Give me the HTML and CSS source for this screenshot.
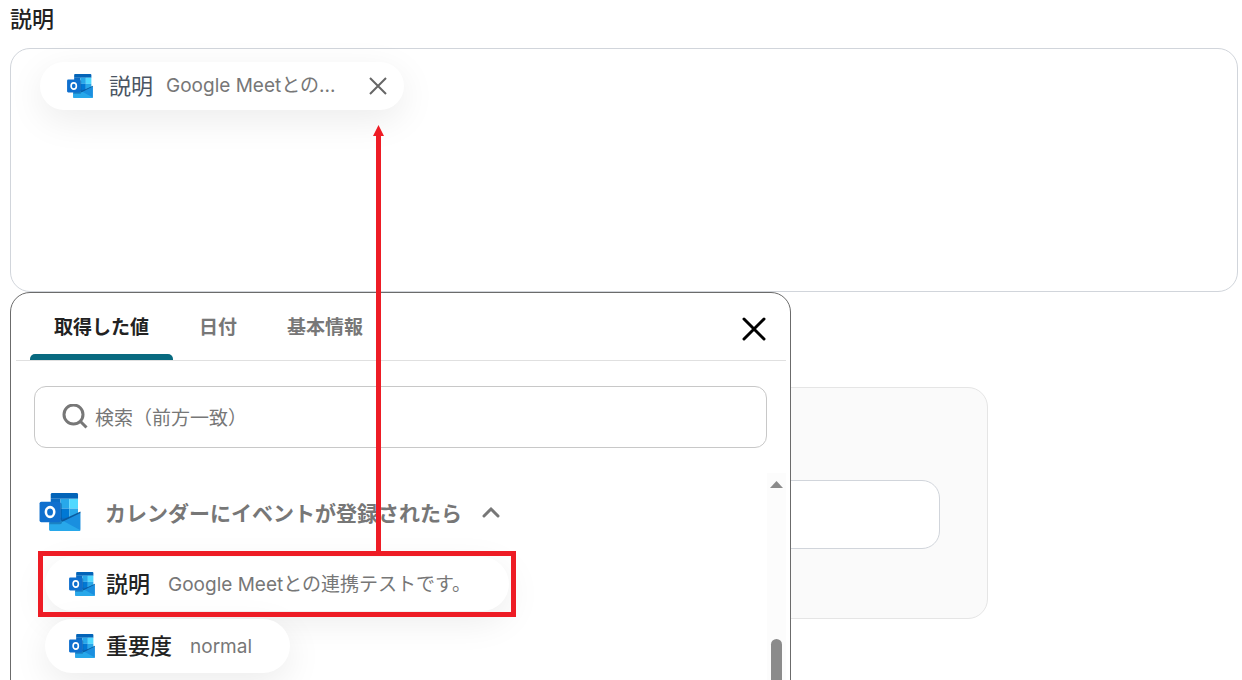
FILE: index.html
```html
<!DOCTYPE html>
<html lang="ja">
<head>
  <meta charset="UTF-8" />
  <meta name="viewport" content="width=device-width, initial-scale=1.0" />
  <title>説明</title>
  <link rel="stylesheet" href="styles.css">
</head>
<body>
  <svg class="defs" aria-hidden="true">
    <symbol id="outlook" viewBox="0 0 42 39">
      <path d="M13 0h25a1.500 1.500 0 0 1 1.500 1.500V6H11.500V1.500A1.500 1.500 0 0 1 13 0z" fill="#0364b8" />
      <path d="M11.500 6h10v10h-10z" fill="#0a6cc4" />
      <path d="M21.500 6h9v10h-9z" fill="#28a8ea" />
      <path d="M30.500 6h9v10h-9z" fill="#50d9ff" />
      <path d="M11.500 16h10v14h-10z" fill="#0364b8" />
      <path d="M21.500 16h9v12h-9z" fill="#0078d4" />
      <path d="M30.500 16h9v9h-9z" fill="#28a8ea" />
      <path d="M21.500 25.500h18V30h-18z" fill="#0a6cc4" />
      <path d="M42 20v17.500a1.500 1.500 0 0 1-1.500 1.500h-29A1.500 1.500 0 0 1 10 37.500V31l13-2z" fill="#1a8fdf" />
      <path d="M10 27h11l21 11.200c-.3.500-.8.800-1.500.8h-29A1.500 1.500 0 0 1 10 37.500z" fill="#28a8ea" />
      <path d="M22 28.300L42 19v1.500L23.500 29.500z" fill="#0a5a9e" />
      <path d="M11 10h10a2 2 0 0 1 2 2v18a2 2 0 0 1-2 2H10V10z" fill="#07498a" opacity=".4" />
      <rect x="0" y="9" width="21.500" height="21" rx="1.800" fill="#0f6fce" />
      <ellipse cx="10.800" cy="19.500" rx="4.300" ry="5" fill="none" stroke="#fff" stroke-width="2.600" />
    </symbol>
  </svg>

  <main class="page">
    <h1 class="label" id="desc-label">説明</h1>
    <div class="field">
      <div class="editor" role="group" aria-labelledby="desc-label">
        <div class="chip chip-selected">
          <svg class="chip-icon"><use href="#outlook" /></svg>
          <span class="chip-name">説明</span>
          <span class="chip-value">Google Meetとの...</span>
          <button class="chip-remove" type="button" aria-label="削除">
            <svg width="18" height="18" viewBox="0 0 18 18"><path d="M1 1l16 16M17 1L1 17" /></svg>
          </button>
        </div>
      </div>

      <section class="picker">
        <header class="picker-head">
          <div class="tabs" role="tablist">
            <button class="tab active" type="button" role="tab" aria-selected="true">取得した値</button>
            <button class="tab" type="button" role="tab" aria-selected="false">日付</button>
            <button class="tab" type="button" role="tab" aria-selected="false">基本情報</button>
          </div>
          <button class="picker-close" type="button" aria-label="閉じる">
            <svg width="24" height="24" viewBox="0 0 24 24"><path d="M2 2l20 20M22 2L2 22" /></svg>
          </button>
        </header>

        <label class="search">
          <svg width="26" height="26" viewBox="0 0 26 26"><circle cx="11.500" cy="10.500" r="9.500" /><path d="M18.500 17.500l6 6" /></svg>
          <input type="text" placeholder="検索（前方一致）" aria-label="検索" />
        </label>

        <div class="results">
          <div class="results-main">
            <button class="group" type="button" aria-expanded="true">
              <svg class="group-icon"><use href="#outlook" /></svg>
              <span>カレンダーにイベントが登録されたら</span>
              <svg class="chevron" width="18" height="12" viewBox="0 0 18 12"><path d="M2 10l7-7 7 7" /></svg>
            </button>
            <div class="options">
              <div class="option-row">
                <button class="chip option" type="button">
                  <svg class="chip-icon"><use href="#outlook" /></svg>
                  <span class="chip-name">説明</span>
                  <span class="chip-value">Google Meetとの連携テストです。</span>
                </button>
                <div class="marker">
                  <svg class="marker-arrow" width="11" height="426" viewBox="0 0 11 426"><path d="M5.500 0L11 11H8v415H3V11H0z" /></svg>
                </div>
              </div>
              <div class="option-row">
                <button class="chip option" type="button">
                  <svg class="chip-icon"><use href="#outlook" /></svg>
                  <span class="chip-name">重要度</span>
                  <span class="chip-value">normal</span>
                </button>
              </div>
            </div>
          </div>
          <div class="scrollbar">
            <svg width="13" height="7" viewBox="0 0 13 7"><path d="M6.500 0L13 7H0z" /></svg>
            <div class="thumb"></div>
          </div>
        </div>
      </section>
    </div>

    <div class="panel">
      <input class="panel-input" type="text" aria-label="値" />
    </div>
  </main>
</body>
</html>
```
FILE: styles.css
```css
* {
  box-sizing: border-box;
}
body {
  margin: 0;
  background: #fff;
  color: #222;
  font-family: Inter, "Noto Sans CJK JP", sans-serif;
}
button,
input {
  font: inherit;
  color: inherit;
  border: none;
  background: none;
  padding: 0;
}
button {
  cursor: pointer;
}
svg {
  display: block;
  flex: none;
}
.defs {
  position: absolute;
  width: 0;
  height: 0;
}
.page {
  height: 100vh;
  padding: 4px 4px 0 10px;
  overflow: hidden;
}
.label {
  margin: 0 0 14px;
  font-size: 22px;
  line-height: 30px;
  font-weight: 500;
}

/* editor */
.field {
  position: relative;
}
.editor {
  min-height: 244px;
  padding: 13px 29px;
  border: 1px solid #d1d5db;
  border-radius: 20px;
}
.chip {
  display: flex;
  align-items: center;
  width: fit-content;
  border-radius: 27px;
  background: #fff;
  box-shadow: 0 10px 36px rgba(0, 0, 0, 0.08);
  white-space: nowrap;
}
.chip-icon {
  width: 26px;
  height: 24px;
}
.chip-name {
  font-size: 22px;
  line-height: 30px;
}
.chip-value {
  font-size: 19px;
  line-height: 30px;
  color: #777;
}
.chip-selected {
  height: 48px;
  padding: 0 17px 0 27px;
}
.chip-selected .chip-name {
  margin: 0 13px 0 16px;
  color: #4b5563;
}
.chip-remove {
  margin-left: 34px;
}
.chip-remove path {
  fill: none;
  stroke: #666;
  stroke-width: 2;
}

/* value picker */
.picker {
  position: absolute;
  top: 100%;
  left: 0;
  width: 781px;
  max-width: 100%;
  height: 480px;
  display: flex;
  flex-direction: column;
  border: 1px solid #6b6b6b;
  border-radius: 20px;
  background: #fff;
}
.picker-head {
  display: flex;
  justify-content: space-between;
  align-items: center;
  height: 68px;
  margin: 0 4px 0 5px;
  padding: 4px 20px 0 14px;
  border-bottom: 1px solid #e0e0e0;
}
.tabs {
  display: flex;
  align-self: stretch;
  gap: 2px;
}
.tab {
  padding: 0 24px;
  border-bottom: 6px solid transparent;
  font-size: 19px;
  font-weight: 700;
  color: #777;
}
.tab.active {
  position: relative;
  color: #222;
}
.tab.active::after {
  content: "";
  position: absolute;
  left: 0;
  right: 0;
  bottom: -6px;
  height: 6px;
  border-radius: 5px 5px 0 0;
  background: #086a80;
}
.picker-close path {
  fill: none;
  stroke: #000;
  stroke-width: 3;
  stroke-linecap: round;
}
.search {
  display: flex;
  align-items: center;
  gap: 7px;
  height: 62px;
  margin: 25px 23px;
  padding: 0 27px;
  border: 1px solid #c8c8c8;
  border-radius: 12px;
}
.search svg {
  fill: none;
  stroke: #777;
  stroke-width: 3;
}
.search input {
  flex: 1;
  padding-top: 2px;
  font-size: 19px;
  outline: none;
}
.search input::placeholder {
  color: #777;
  opacity: 1;
}
.results {
  display: flex;
  flex: 1;
  padding: 0 4px 0 28px;
}
.results-main {
  flex: 1;
}
.group {
  display: flex;
  align-items: center;
  height: 78px;
  font-size: 21px;
  font-weight: 700;
  color: #777;
}
.group-icon {
  width: 42px;
  height: 38px;
  margin-right: 24px;
}
.chevron {
  margin-left: 20px;
  fill: none;
  stroke: #777;
  stroke-width: 3;
  stroke-linecap: round;
}
.options {
  display: flex;
  flex-direction: column;
  align-items: flex-start;
  gap: 8px;
  margin: 6px 0 0 6px;
}
.option-row {
  position: relative;
}
.option {
  height: 54px;
  padding: 0 38px 0 24px;
}
.option .chip-name {
  margin: 0 18px 0 11px;
  font-weight: 500;
}
.option .chip-value {
  padding-top: 2px;
}
.marker {
  position: absolute;
  z-index: 1;
  inset: -6px -7px;
  border: 5px solid #ee1c25;
  pointer-events: none;
}
.marker-arrow {
  position: absolute;
  left: 330px;
  bottom: calc(100% + 5px);
  fill: #ee1c25;
}
.scrollbar {
  display: flex;
  flex-direction: column;
  align-items: center;
  gap: 151px;
  width: 19px;
  padding-top: 8px;
  background: #fcfcfc;
}
.scrollbar svg {
  fill: #8b8b8b;
}
.thumb {
  flex: 1;
  width: 11px;
  border-radius: 6px;
  background: #8b8b8b;
}

/* panel behind the picker */
.panel {
  width: 978px;
  max-width: 100%;
  margin-top: 95px;
  padding: 92px 47px 69px;
  border: 1px solid #e5e5e5;
  border-radius: 20px;
  background: #fafafa;
}
.panel-input {
  display: block;
  width: 100%;
  height: 69px;
  padding: 0 24px;
  border: 1px solid #d1d5db;
  border-radius: 18px;
  background: #fff;
}
```
